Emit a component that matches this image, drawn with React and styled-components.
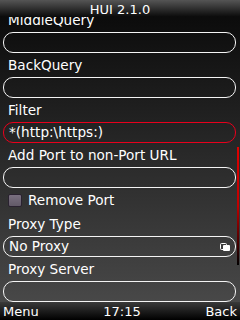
import styled, { createGlobalStyle } from "styled-components";

const Global = createGlobalStyle`
  html, body {
    margin: 0;
    padding: 0;
    background: #000;
  }
  * {
    box-sizing: border-box;
  }
`;

const fields = [
  { label: "MiddleQuery", value: "" },
  { label: "BackQuery", value: "" },
  { label: "Filter", value: "*(http:\\https:)", focused: true },
  { label: "Add Port to non-Port URL", value: "" },
];

const SelectIcon = () => (
  <svg width="10" height="8" viewBox="0 0 10 8">
    <rect x="0.5" y="0.5" width="6" height="6" rx="1" fill="none" stroke="#fff" />
    <rect x="3" y="2" width="7" height="6" rx="1" fill="#fff" />
  </svg>
);

const App = () => (
  <Screen>
    <Global />
    <TitleBar>HUI 2.1.0</TitleBar>
    <Body>
      <List>
        {fields.map((f) => (
          <Field key={f.label}>
            <Label>{f.label}</Label>
            <Input $focused={f.focused}>{f.value}</Input>
          </Field>
        ))}
        <CheckRow>
          <Box />
          <span>Remove Port</span>
        </CheckRow>
        <Field>
          <Label>Proxy Type</Label>
          <Input>
            <span>No Proxy</span>
            <SelectIcon />
          </Input>
        </Field>
        <Field>
          <Label>Proxy Server</Label>
          <Input />
        </Field>
      </List>
      <ScrollBar />
    </Body>
    <SoftKeys>
      <span>Menu</span>
      <span>17:15</span>
      <span>Back</span>
    </SoftKeys>
  </Screen>
);

const Screen = styled.div`
  width: 240px;
  height: 320px;
  display: flex;
  flex-direction: column;
  overflow: hidden;
  font-family: "DejaVu Sans", sans-serif;
  font-size: 13px;
  color: #fff;
  background: linear-gradient(#080808, #4c4c4c);
`;

const TitleBar = styled.div`
  height: 17px;
  flex: 0 0 17px;
  padding-top: 1px;
  line-height: 17px;
  text-align: center;
  background: linear-gradient(#555, #0a0a0a);
  position: relative;
  z-index: 1;
`;

const Body = styled.div`
  flex: 1;
  position: relative;
  overflow: hidden;
  font-size: 13.6px;
`;

const List = styled.div`
  margin-top: -9px;
  display: flex;
  flex-direction: column;
`;

const Field = styled.div`
  display: flex;
  flex-direction: column;
`;

const Label = styled.div`
  height: 24px;
  line-height: 24px;
  padding-left: 8px;
  white-space: nowrap;
`;

const Input = styled.div`
  height: 21px;
  margin: 0 4px 0 3px;
  padding: 0 5px;
  border: 1px solid ${({ $focused }) => ($focused ? "#e8001c" : "#f4f4f4")};
  border-radius: 10px;
  display: flex;
  align-items: center;
  justify-content: space-between;
  line-height: 19px;
  white-space: nowrap;
`;

const CheckRow = styled.div`
  height: 24px;
  display: flex;
  align-items: center;
  gap: 6px;
  padding-left: 8px;
`;

const Box = styled.div`
  width: 14px;
  height: 13px;
  border: 1px solid #2a2230;
  border-radius: 2px;
  background: linear-gradient(#7a7080, #625a68);
`;

const ScrollBar = styled.div`
  position: absolute;
  left: 237px;
  top: 130px;
  width: 2px;
  height: 118px;
  background: linear-gradient(#e00000, #c00000 50%, #000);
`;

const SoftKeys = styled.div`
  height: 18px;
  flex: 0 0 18px;
  padding: 1px 3px 0 3px;
  line-height: 18px;
  display: flex;
  justify-content: space-between;
  background: linear-gradient(#3a3a3a, #000);
`;

export default App;
